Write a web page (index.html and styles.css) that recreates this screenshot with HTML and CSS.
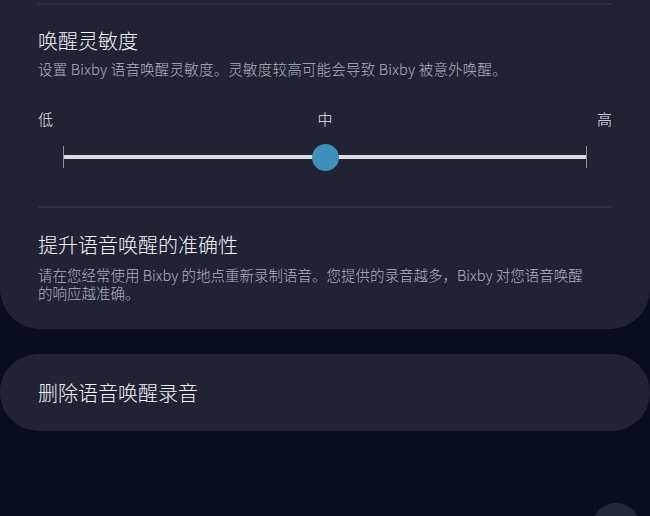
FILE: index.html
```html
<!DOCTYPE html>
<html lang="zh-CN">
<head>
<meta charset="UTF-8">
<meta name="viewport" content="width=device-width, initial-scale=1.0">
<title>Bixby 语音唤醒</title>
<link rel="stylesheet" href="styles.css">
</head>
<body>
<div class="card card-main">
  <div class="divider"></div>
  <h2 class="item-title">唤醒灵敏度</h2>
  <p class="item-desc">设置 Bixby 语音唤醒灵敏度。灵敏度较高可能会导致 Bixby 被意外唤醒。</p>
  <div class="levels">
    <span>低</span>
    <span>中</span>
    <span>高</span>
  </div>
  <div class="slider">
    <div class="track">
      <div class="thumb"></div>
    </div>
  </div>
  <div class="divider divider-mid"></div>
  <h2 class="item-title title-second">提升语音唤醒的准确性</h2>
  <p class="item-desc desc-second">请在您经常使用 Bixby 的地点重新录制语音。您提供的录音越多，Bixby 对您语音唤醒的响应越准确。</p>
</div>

<div class="card card-action">
  <span class="action-title">删除语音唤醒录音</span>
</div>

<div class="fab"></div>
</body>
</html>
```

FILE: styles.css
```css
html {
  overflow: hidden;
}

body {
  margin: 0;
  padding: 0;
  background-color: #0a0c1f;
  font-family: "Noto Sans CJK SC", "Noto Sans", sans-serif;
  color: #eeeef1;
  height: 516px;
  overflow: hidden;
  position: relative;
}

.card {
  background-color: #212335;
  padding: 0 38px;
}

.card-main {
  padding-top: 3px;
  padding-bottom: 27px;
  border-radius: 0 0 40px 40px;
}

.divider {
  height: 2px;
  background-color: #2b2e40;
}

.item-title {
  margin: 22px 0 0;
  font-size: 20px;
  line-height: 28px;
  font-weight: 300;
  color: #f4f4f6;
}

.item-desc {
  margin: 4px 0 0;
  font-size: 14.5px;
  line-height: 20px;
  font-weight: 300;
  letter-spacing: 0.2px;
  color: #b0b2bb;
}

.levels {
  display: flex;
  justify-content: space-between;
  margin-top: 30px;
  font-size: 15px;
  line-height: 20px;
  font-weight: 300;
  color: #e8e8ec;
}

.slider {
  margin: 14px 25px 0;
  height: 28px;
  display: flex;
  align-items: center;
}

.track {
  position: relative;
  flex: 1;
  height: 4px;
  border-radius: 2px;
  background-color: #dcdde2;
}

.track::before,
.track::after {
  content: "";
  position: absolute;
  top: -9px;
  width: 1px;
  height: 22px;
  background-color: #8d8f9c;
}

.track::before {
  left: 0;
}

.track::after {
  right: 0;
}

.thumb {
  position: absolute;
  left: 50%;
  top: 50%;
  width: 27px;
  height: 27px;
  margin: -13.5px 0 0 -13px;
  border-radius: 50%;
  background-color: #3d8fba;
}

.divider-mid {
  margin-top: 35px;
}

.title-second {
  margin-top: 23px;
}

.desc-second {
  margin-top: 7px;
  line-height: 18px;
  letter-spacing: 0;
  max-width: 552px;
}

.card-action {
  margin-top: 25px;
  height: 77px;
  border-radius: 38px;
  display: flex;
  align-items: center;
}

.action-title {
  font-size: 20px;
  font-weight: 300;
  color: #f4f4f6;
}

.fab {
  position: absolute;
  left: 592px;
  top: 503px;
  width: 48px;
  height: 13px;
  background: radial-gradient(circle at 24px 24px, #24273a 23.5px, transparent 24.5px);
}
```
